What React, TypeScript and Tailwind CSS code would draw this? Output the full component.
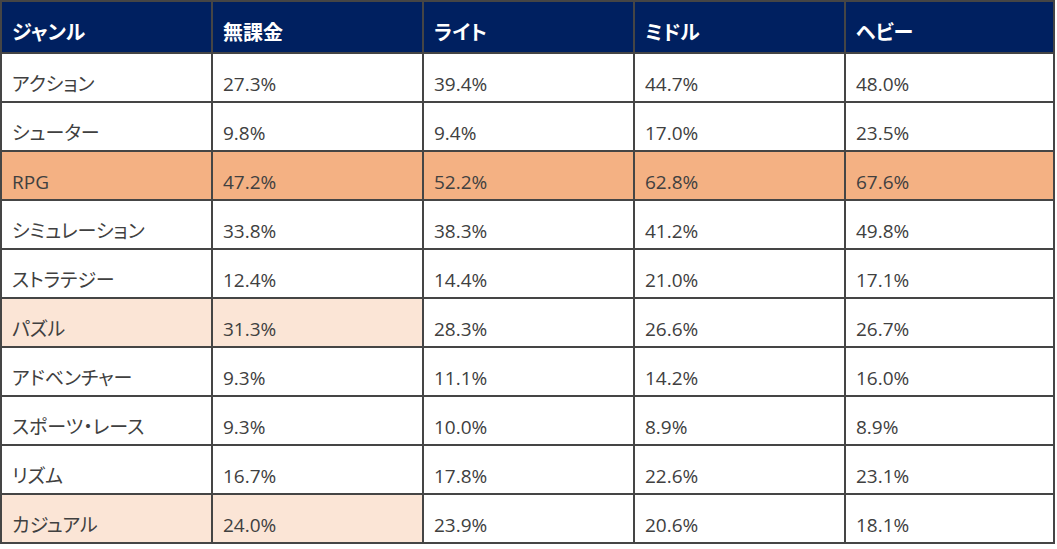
const headers = ["ジャンル", "無課金", "ライト", "ミドル", "ヘビー"]

type Row = { genre: string; values: string[]; tone?: "strong" | "light" }

const rows: Row[] = [
  { genre: "アクション", values: ["27.3%", "39.4%", "44.7%", "48.0%"] },
  { genre: "シューター", values: ["9.8%", "9.4%", "17.0%", "23.5%"] },
  { genre: "RPG", values: ["47.2%", "52.2%", "62.8%", "67.6%"], tone: "strong" },
  { genre: "シミュレーション", values: ["33.8%", "38.3%", "41.2%", "49.8%"] },
  { genre: "ストラテジー", values: ["12.4%", "14.4%", "21.0%", "17.1%"] },
  { genre: "パズル", values: ["31.3%", "28.3%", "26.6%", "26.7%"], tone: "light" },
  { genre: "アドベンチャー", values: ["9.3%", "11.1%", "14.2%", "16.0%"] },
  { genre: "スポーツ・レース", values: ["9.3%", "10.0%", "8.9%", "8.9%"] },
  { genre: "リズム", values: ["16.7%", "17.8%", "22.6%", "23.1%"] },
  { genre: "カジュアル", values: ["24.0%", "23.9%", "20.6%", "18.1%"], tone: "light" },
]

const colWidths = ["w-[211px]", "w-[211px]", "w-[211px]", "w-[211px]", "w-[209px]"]

function cellBg(row: Row, col: number) {
  if (row.tone === "strong") return "bg-[#f4b183]"
  // light rows only tint the genre and 無課金 columns
  if (row.tone === "light" && col < 2) return "bg-[#fbe5d6]"
  return "bg-white"
}

export default function App() {
  return (
    <div className="w-[1057px] h-[549px] bg-white font-['Open_Sans','Noto_Sans_CJK_JP',sans-serif] [font-feature-settings:'palt']">
      <div className="flex flex-col w-max border-t-2 border-l-2 border-[#454545]">
        {/* Header */}
        <div className="flex">
          {headers.map((h, i) => (
            <div
              key={h}
              className={`${colWidths[i]} h-[52px] shrink-0 border-r-2 border-b-2 border-[#454545] bg-[#002060] pl-[10px] pt-[17px] text-[20px] leading-[28px] font-bold text-white`}
            >
              {h}
            </div>
          ))}
        </div>

        {/* Body */}
        {rows.map((row) => (
          <div key={row.genre} className="flex">
            {[row.genre, ...row.values].map((v, i) => (
              <div
                key={i}
                className={`${colWidths[i]} ${cellBg(row, i)} h-[49px] shrink-0 border-r-2 border-b-2 border-[#454545] pl-[10px] pt-[17px] text-[19px] leading-[26px] text-[#404040]`}
              >
                {v}
              </div>
            ))}
          </div>
        ))}
      </div>
    </div>
  )
}
